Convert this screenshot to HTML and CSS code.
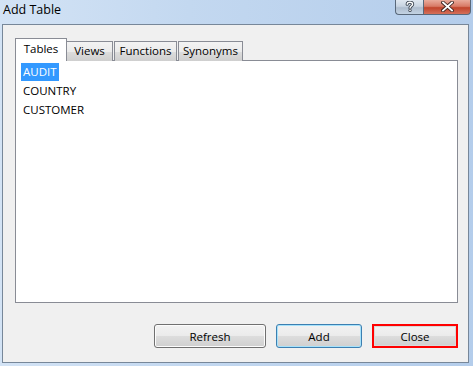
FILE: index.html
```html
<!DOCTYPE html>
<html>
<head>
<meta charset="utf-8">
<link rel="stylesheet" href="styles.css">
</head>
<body>
<div class="window">
  <div class="titlebar">
    <span class="title">Add Table</span>
    <div class="caption-buttons">
      <div class="cap-btn help">
        <svg width="10" height="11" viewBox="0 0 10 11">
          <path d="M2.2 3.2 C2.2 0.6 7.6 0.6 7.6 3.2 C7.6 5 5 5 5 7" fill="none" stroke="#3a4450" stroke-width="3.2" stroke-linecap="round"/>
          <circle cx="5" cy="9.4" r="1.6" fill="#3a4450"/>
          <path d="M2.2 3.2 C2.2 0.6 7.6 0.6 7.6 3.2 C7.6 5 5 5 5 7" fill="none" stroke="#ffffff" stroke-width="1.4" stroke-linecap="round"/>
          <circle cx="5" cy="9.4" r="0.8" fill="#ffffff"/>
        </svg>
      </div>
      <div class="cap-btn close">
        <svg width="13" height="11" viewBox="0 0 13 11">
          <path d="M2 1.5 L11 9.5 M11 1.5 L2 9.5" fill="none" stroke="#3b2420" stroke-width="3.6" stroke-linecap="square"/>
          <path d="M2 1.5 L11 9.5 M11 1.5 L2 9.5" fill="none" stroke="#ffffff" stroke-width="1.8" stroke-linecap="square"/>
        </svg>
      </div>
    </div>
  </div>
  <div class="client">
    <div class="tabstrip">
      <div class="tab active">Tables</div>
      <div class="tab first-inactive">Views</div>
      <div class="tab">Functions</div>
      <div class="tab">Synonyms</div>
    </div>
    <div class="panel">
      <ul class="list">
        <li><span class="item selected">AUDIT</span></li>
        <li><span class="item">COUNTRY</span></li>
        <li><span class="item">CUSTOMER</span></li>
      </ul>
    </div>
    <div class="buttons">
      <button class="btn refresh">Refresh</button>
      <button class="btn default">Add</button>
      <button class="btn highlighted">Close</button>
    </div>
  </div>
</div>
</body>
</html>
```

FILE: styles.css
```css
* { box-sizing: border-box; }
html, body { margin: 0; padding: 0; }
body {
  width: 473px;
  height: 366px;
  overflow: hidden;
  font-family: "Open Sans", "Noto Sans", sans-serif;
  font-size: 11.5px;
  color: #000;
}
.window {
  width: 473px;
  height: 366px;
  display: flex;
  flex-direction: column;
  background: linear-gradient(90deg, #d3e3f5 0%, #c3d8f0 40%, #b4cdeb 100%);
}
.titlebar {
  height: 24px;
  flex: none;
  display: flex;
  align-items: flex-start;
  padding-left: 3px;
}
.title {
  font-family: "Open Sans", "Noto Sans", sans-serif;
  font-size: 12.5px;
  line-height: 20px;
  color: #000;
  padding-top: 0px;
}
.caption-buttons {
  margin-left: auto;
  margin-right: 2px;
  display: flex;
}
.cap-btn {
  height: 15px;
  display: flex;
  align-items: center;
  justify-content: center;
  border: 1px solid #59687a;
  border-top: none;
}
.cap-btn svg { display: block; margin-top: -1px; }
.help {
  width: 28px;
  border-right: none;
  border-radius: 0 0 0 4px;
  background: linear-gradient(180deg, #dfe7f0 0%, #c8d4e1 45%, #aebdce 55%, #c3d3e3 100%);
}
.close {
  width: 48px;
  border-radius: 0 0 4px 0;
  background: linear-gradient(180deg, #e9ab9c 0%, #d87a66 45%, #c1442c 55%, #d4705a 100%);
}
.client {
  flex: 1;
  margin: 0 4px 3px 2px;
  border: 1px solid #778799;
  background: #f0f0f0;
  padding: 13px 10px 14px 12px;
  display: flex;
  flex-direction: column;
}
.tabstrip {
  display: flex;
  align-items: flex-end;
  height: 23px;
  margin-bottom: -1px;
  position: relative;
  z-index: 1;
}
.tab {
  height: 20px;
  border: 1px solid #898c95;
  border-bottom: none;
  background: linear-gradient(180deg, #f3f3f3 0%, #ebebeb 50%, #dddddd 51%, #cfcfcf 100%);
  text-align: center;
  line-height: 18px;
  font-size: 11.5px;
  margin-left: 1px;
}
.tab.active {
  height: 23px;
  width: 52px;
  background: #fff;
  margin-left: 0;
  line-height: 20px;
}
.tab.first-inactive {
  width: 46px;
  border-left: none;
  margin-left: 0;
}
.tab:nth-child(3) { width: 63px; }
.tab:nth-child(4) { width: 65px; }
.panel {
  height: 243px;
  flex: none;
  border: 1px solid #898c95;
  background: #fff;
}
.list {
  list-style: none;
  margin: 0;
  padding: 2px 0 0 5px;
}
.list li {
  height: 19px;
  line-height: 18px;
}
.item {
  display: inline-block;
  padding: 0 2px;
  height: 18px;
}
.item.selected {
  background: #3399ff;
  color: #fff;
}
.buttons {
  margin-top: 21px;
  display: flex;
  justify-content: flex-end;
  gap: 10px;
}
.btn {
  height: 24px;
  width: 86px;
  font-family: "Open Sans", "Noto Sans", sans-serif;
  font-size: 11.5px;
  color: #000;
  border: 1px solid #707070;
  border-radius: 3px;
  background: linear-gradient(180deg, #f2f2f2 0%, #ebebeb 50%, #dddddd 51%, #cfcfcf 100%);
  box-shadow: inset 0 0 0 1px #fcfcfc;
  padding: 0;
}
.btn.refresh { width: 112px; }
.btn.default {
  border-color: #3c7fb1;
  box-shadow: inset 0 0 0 1px #a6e2fb;
  background: linear-gradient(180deg, #eaf6fd 0%, #d9f0fc 50%, #bee6fd 51%, #a7d9f5 100%);
  background: linear-gradient(180deg, #f2f2f2 0%, #ebebeb 50%, #dddddd 51%, #cfcfcf 100%);
}
.btn.highlighted {
  border: 2px solid #ff0000;
  border-radius: 0;
  box-shadow: inset 0 0 0 1px #d9d9d9;
}
```
